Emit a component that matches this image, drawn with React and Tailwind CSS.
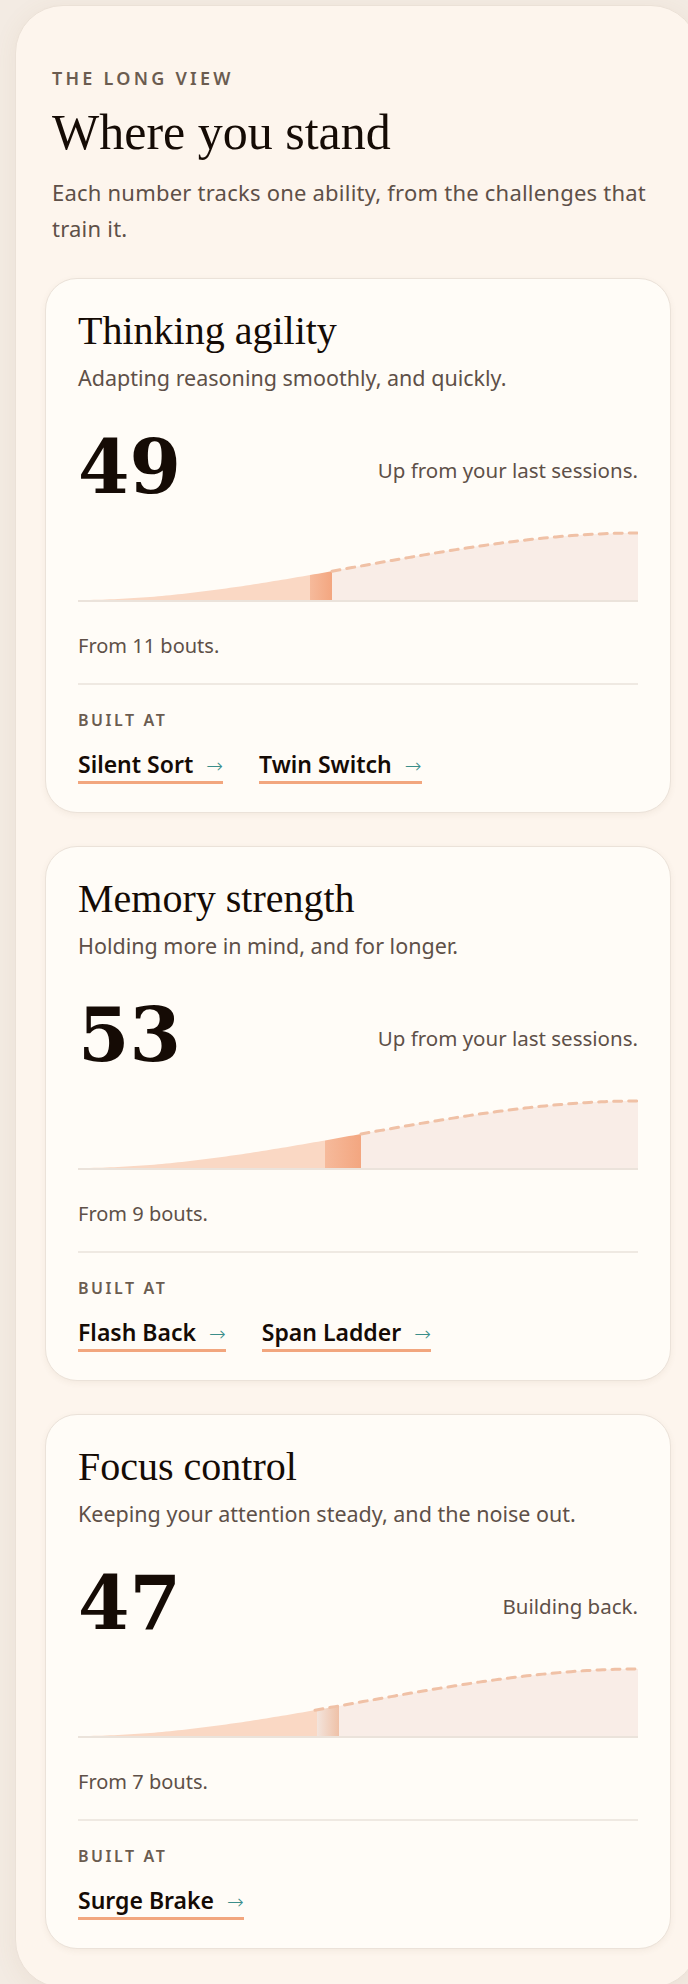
import React from 'react'

const abilities = [
  {
    title: 'Thinking agility',
    blurb: 'Adapting reasoning smoothly, and quickly.',
    score: 49,
    note: 'Up from your last sessions.',
    bouts: 11,
    band: [232, 254],
    trend: 'up',
    games: ['Silent Sort', 'Twin Switch'],
  },
  {
    title: 'Memory strength',
    blurb: 'Holding more in mind, and for longer.',
    score: 53,
    note: 'Up from your last sessions.',
    bouts: 9,
    band: [247, 283],
    trend: 'up',
    games: ['Flash Back', 'Span Ladder'],
  },
  {
    title: 'Focus control',
    blurb: 'Keeping your attention steady, and the noise out.',
    score: 47,
    note: 'Building back.',
    bouts: 7,
    band: [239, 261],
    trend: 'back',
    games: ['Surge Brake'],
  },
]

// chart geometry: a smoothstep rise across the full width
const W = 560
const BASE = 69
const RISE = 67

const curveY = (x) => {
  const t = x / W
  const s = t * t * (3 - 2 * t)
  return BASE - RISE * s
}

const linePath = (a, b) => {
  let d = `M${a},${curveY(a).toFixed(2)}`
  for (let x = a + 4; x < b; x += 4) d += ` L${x},${curveY(x).toFixed(2)}`
  d += ` L${b},${curveY(b).toFixed(2)}`
  return d
}

const areaPath = (a, b) => {
  let d = `M${a},${BASE}`
  for (let x = a; x < b; x += 4) d += ` L${x},${curveY(x).toFixed(2)}`
  d += ` L${b},${curveY(b).toFixed(2)} L${b},${BASE} Z`
  return d
}

function Curve({ id, band, trend }) {
  const [from, to] = band
  const back = trend === 'back'
  return (
    <svg width={W} height="71" viewBox={`0 0 ${W} 71`} className="block">
      <defs>
        <linearGradient id={id} x1="0" x2="1" y1="0" y2="0">
          {back ? (
            <>
              <stop offset="0" stopColor="#f3e4dc" />
              <stop offset="1" stopColor="#efc1a7" />
            </>
          ) : (
            <>
              <stop offset="0" stopColor="#f6ba9b" />
              <stop offset="1" stopColor="#f3a680" />
            </>
          )}
        </linearGradient>
      </defs>
      <path d={areaPath(0, from)} fill="#fad8c4" />
      <path d={areaPath(from, to)} fill={`url(#${id})`} />
      <path d={areaPath(to, W)} fill="#f9ede7" />
      <path
        d={linePath(back ? from - 2 : to, W)}
        fill="none"
        stroke="#f0c1a6"
        strokeWidth="3"
        strokeDasharray="8 7"
        strokeLinecap="round"
      />
      <rect x="0" y={BASE} width={W} height="2" fill="#ebe3db" />
    </svg>
  )
}

function AbilityCard({ item, idx }) {
  return (
    <div className="rounded-[32px] border border-[#ebe2d9] bg-[#fffcf7] px-8 pt-[28px] pb-[28px] shadow-[0_2px_6px_rgba(120,90,60,0.07)]">
      <h3 className="font-['Liberation_Serif',serif] text-[40px] leading-[48px] text-[#150b05]">
        {item.title}
      </h3>
      <p className="mt-[9px] text-[21.5px] leading-[28px] text-[#5e5048]">{item.blurb}</p>

      <div className="mt-[35px] flex items-start justify-between">
        <span className="font-['DejaVu_Serif',serif] text-[74px] font-bold leading-[80px] text-[#150b05]">
          {item.score}
        </span>
        <span className="mt-[29px] text-[20.5px] leading-[28px] text-[#5e5048]">{item.note}</span>
      </div>

      <div className="mt-[24px]">
        <Curve id={`band-${idx}`} band={item.band} trend={item.trend} />
      </div>

      <p className="mt-[30px] text-[20px] leading-[28px] text-[#5e5048]">From {item.bouts} bouts.</p>

      <div className="mt-[23px] h-[2px] bg-[#efe9e2]" />

      <p className="mt-[25px] text-[16px] font-semibold leading-[20px] tracking-[0.16em] text-[#6b5c50]">
        BUILT AT
      </p>

      <div className="mt-[20px] flex gap-[36px]">
        {item.games.map((g) => (
          <a
            key={g}
            href="#"
            className="flex h-[34px] items-center gap-[13px] border-b-[3px] border-[#f2a67e] pb-[3px] text-[23px] font-semibold leading-[28px] text-[#150b05]"
          >
            {g}
            <span className="translate-y-[2px] font-['DejaVu_Sans',sans-serif] text-[20px] font-light leading-[28px] text-[#3b8e8a]">
              →
            </span>
          </a>
        ))}
      </div>
    </div>
  )
}

export default function App() {
  return (
    <div className="min-h-screen overflow-hidden bg-[#f3ebe3] pl-[15px] pt-[5px] font-['Noto_Sans',sans-serif]">
      <div className="w-[684px] rounded-[48px] border border-[#ebe1d7] bg-[#fdf5ed] pl-[29px] pr-[27px] pt-[62px] pb-[38px] shadow-[0_4px_24px_rgba(150,110,70,0.08)]">
        <div className="pl-[7px]">
          <p className="text-[18px] font-semibold leading-[20px] tracking-[0.18em] text-[#6b5c50]">THE LONG VIEW</p>
          <h1 className="mt-[16px] font-['Liberation_Serif',serif] text-[50px] leading-[56px] text-[#150b05]">
            Where you stand
          </h1>
          <p className="mt-[14px] w-[600px] text-[22px] leading-[36px] tracking-[0.01em] text-[#5e5048]">
            Each number tracks one ability, from the challenges that train it.
          </p>
        </div>

        <div className="mt-[32px] flex flex-col gap-[33px]">
          {abilities.map((item, i) => (
            <AbilityCard key={item.title} item={item} idx={i} />
          ))}
        </div>
      </div>
    </div>
  )
}
